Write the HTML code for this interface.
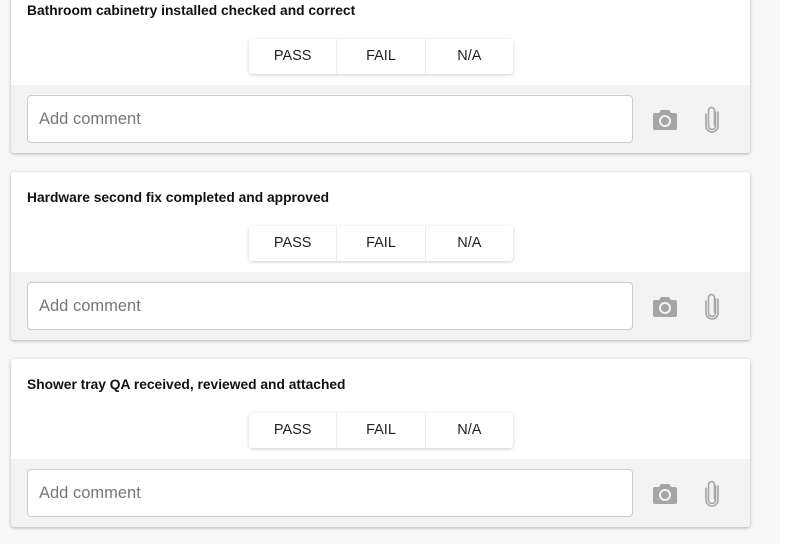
<!DOCTYPE html>
<html><head><style>
body{margin:0;width:803px;height:544px;background:#f7f7f7;overflow:hidden;position:relative;font-family:"Liberation Sans",Arial,sans-serif}
.strip{position:absolute;left:780px;top:0;width:23px;height:544px;background:#fff}
.card{position:absolute;left:11px;width:739px;height:168px;background:#fff;border-radius:3px;box-shadow:0 1px 3px rgba(0,0,0,.28);overflow:hidden}
.t{position:absolute;left:16px;top:18px;font-weight:bold;font-size:13.8px;color:#111}
.grp{position:absolute;left:238px;top:54px;width:264px;height:35px;display:flex;box-shadow:0 1px 3px rgba(0,0,0,.2);border-radius:3px;background:#fff}
.grp div{flex:1;text-align:center;line-height:35px;font-size:14.5px;color:#222;border-right:1px solid #eee}
.grp div:last-child{border:none}
.foot{position:absolute;left:0;top:100px;width:739px;height:68px;background:#f3f3f3}
.in{position:absolute;left:16px;top:10px;width:606px;height:48px;background:#fff;border:1px solid #ccc;border-radius:4px;box-sizing:border-box;padding-left:11px;line-height:46px;font-size:16.5px;color:#777}
.cam{position:absolute;left:642px;top:24px}
.clip{position:absolute;left:693px;top:20px}
</style></head><body>
<div class="strip"></div>
<div class="card" style="top:-15px"><div class="t">Bathroom cabinetry installed checked and correct</div><div class="grp"><div>PASS</div><div>FAIL</div><div>N/A</div></div><div class="foot"><div class="in">Add comment</div>
<svg class="cam" width="24" height="22" viewBox="0 0 24 22"><path d="M8 1h8l2 3h4a2 2 0 0 1 2 2v13a2 2 0 0 1-2 2H2a2 2 0 0 1-2-2V6a2 2 0 0 1 2-2h4z" fill="#a5a5a5"/><circle cx="12" cy="12" r="5" fill="none" stroke="#f3f3f3" stroke-width="2"/></svg>
<svg class="clip" width="16" height="28" viewBox="0 0 16 28"><path d="M11.5 7v14a3.5 3.5 0 0 1-7 0V5.5a3 3 0 0 1 6 0V20" fill="none" stroke="#a5a5a5" stroke-width="1.6" stroke-linecap="round"/><path d="M2 9v12a6 6 0 0 0 12 0V7" fill="none" stroke="#a5a5a5" stroke-width="1.6" stroke-linecap="round"/></svg></div></div>
<div class="card" style="top:172px"><div class="t">Hardware second fix completed and approved</div><div class="grp"><div>PASS</div><div>FAIL</div><div>N/A</div></div><div class="foot"><div class="in">Add comment</div>
<svg class="cam" width="24" height="22" viewBox="0 0 24 22"><path d="M8 1h8l2 3h4a2 2 0 0 1 2 2v13a2 2 0 0 1-2 2H2a2 2 0 0 1-2-2V6a2 2 0 0 1 2-2h4z" fill="#a5a5a5"/><circle cx="12" cy="12" r="5" fill="none" stroke="#f3f3f3" stroke-width="2"/></svg>
<svg class="clip" width="16" height="28" viewBox="0 0 16 28"><path d="M11.5 7v14a3.5 3.5 0 0 1-7 0V5.5a3 3 0 0 1 6 0V20" fill="none" stroke="#a5a5a5" stroke-width="1.6" stroke-linecap="round"/><path d="M2 9v12a6 6 0 0 0 12 0V7" fill="none" stroke="#a5a5a5" stroke-width="1.6" stroke-linecap="round"/></svg></div></div>
<div class="card" style="top:359px"><div class="t">Shower tray QA received, reviewed and attached</div><div class="grp"><div>PASS</div><div>FAIL</div><div>N/A</div></div><div class="foot"><div class="in">Add comment</div>
<svg class="cam" width="24" height="22" viewBox="0 0 24 22"><path d="M8 1h8l2 3h4a2 2 0 0 1 2 2v13a2 2 0 0 1-2 2H2a2 2 0 0 1-2-2V6a2 2 0 0 1 2-2h4z" fill="#a5a5a5"/><circle cx="12" cy="12" r="5" fill="none" stroke="#f3f3f3" stroke-width="2"/></svg>
<svg class="clip" width="16" height="28" viewBox="0 0 16 28"><path d="M11.5 7v14a3.5 3.5 0 0 1-7 0V5.5a3 3 0 0 1 6 0V20" fill="none" stroke="#a5a5a5" stroke-width="1.6" stroke-linecap="round"/><path d="M2 9v12a6 6 0 0 0 12 0V7" fill="none" stroke="#a5a5a5" stroke-width="1.6" stroke-linecap="round"/></svg></div></div>
</body></html>
